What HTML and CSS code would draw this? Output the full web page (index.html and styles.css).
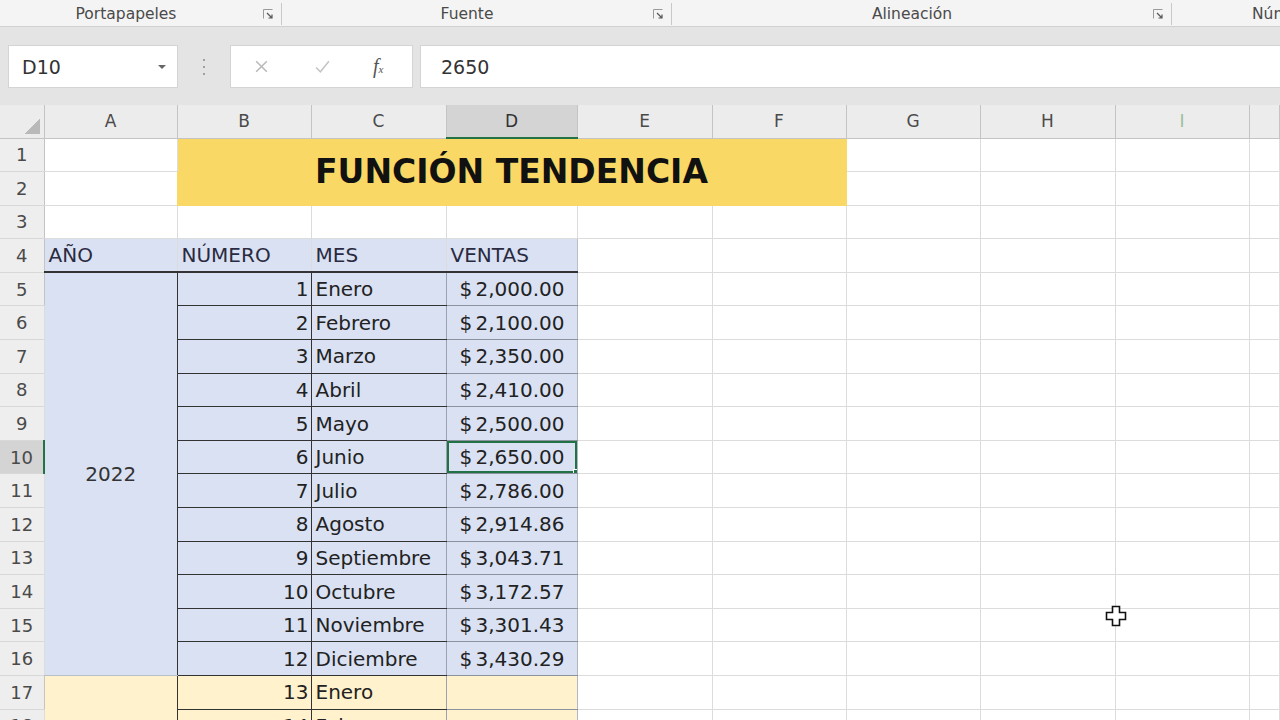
FILE: index.html
```html
<!DOCTYPE html>
<html lang="es">
<head>
    <meta charset="UTF-8">
    <meta name="viewport" content="width=device-width, initial-scale=1.0">
    <title>Función Tendencia</title>
    <link rel="stylesheet" href="styles.css">
</head>
<body>
    <div class="ribbon">
        <div class="group g1">
            <span class="label">Portapapeles</span>
            <svg class="launcher" viewBox="0 0 12 12"><path d="M1.5 10.5v-9h9" fill="none" stroke="#9a9a9a"/><path d="M5 5l5 5M6.5 10H10V6.5" fill="none" stroke="#555" stroke-width="1.2"/></svg>
        </div>
        <div class="group g2">
            <span class="label">Fuente</span>
            <svg class="launcher" viewBox="0 0 12 12"><path d="M1.5 10.5v-9h9" fill="none" stroke="#9a9a9a"/><path d="M5 5l5 5M6.5 10H10V6.5" fill="none" stroke="#555" stroke-width="1.2"/></svg>
        </div>
        <div class="group g3">
            <span class="label">Alineación</span>
            <svg class="launcher" viewBox="0 0 12 12"><path d="M1.5 10.5v-9h9" fill="none" stroke="#9a9a9a"/><path d="M5 5l5 5M6.5 10H10V6.5" fill="none" stroke="#555" stroke-width="1.2"/></svg>
        </div>
        <div class="group g4">
            <span class="label">Número</span>
        </div>
    </div>

    <div class="bar">
        <div class="formula-row">
            <div class="namebox">
                <span>D10</span>
                <svg class="caret" viewBox="0 0 10 6"><path d="M1 1h8L5 5z" fill="#666"/></svg>
            </div>
            <div class="grip"><i></i><i></i><i></i></div>
            <div class="fx-buttons">
                <svg class="fx-icon" viewBox="0 0 16 16"><path d="M3 3l10 10M13 3L3 13" stroke="#b8b8b8" stroke-width="1.4"/></svg>
                <svg class="fx-icon" viewBox="0 0 16 16"><path d="M2 9l4 4 8-10" fill="none" stroke="#c4c4c4" stroke-width="1.4"/></svg>
                <span class="fx">f<small>x</small></span>
            </div>
            <div class="formula">2650</div>
        </div>
    </div>

    <table class="sheet">
        <colgroup>
            <col class="w-rh"><col class="w-a"><col class="w-b"><col class="w-c"><col class="w-d">
            <col class="w-e"><col class="w-f"><col class="w-g"><col class="w-h"><col class="w-i"><col>
        </colgroup>
        <thead>
            <tr>
                <th class="corner"></th><th>A</th><th>B</th><th>C</th><th class="sel">D</th>
                <th>E</th><th>F</th><th>G</th><th>H</th><th class="dim">I</th><th></th>
            </tr>
        </thead>
        <tbody>
            <tr><th>1</th><td></td><td class="title" colspan="5" rowspan="2">FUNCIÓN TENDENCIA</td><td></td><td></td><td></td><td></td></tr>
            <tr><th>2</th><td></td><td></td><td></td><td></td><td></td></tr>
            <tr><th>3</th><td></td><td></td><td></td><td></td><td></td><td></td><td></td><td></td><td></td><td></td></tr>
            <tr><th>4</th><td class="hd">AÑO</td><td class="hd b">NÚMERO</td><td class="hd c">MES</td><td class="hd d">VENTAS</td><td></td><td></td><td></td><td></td><td></td><td></td></tr>
            <tr><th>5</th><td class="year" rowspan="12">2022</td><td class="num">1</td><td class="mes">Enero</td><td class="venta"><span class="sym">$</span>2,000.00</td><td></td><td></td><td></td><td></td><td></td><td></td></tr>
            <tr><th>6</th><td class="num">2</td><td class="mes">Febrero</td><td class="venta"><span class="sym">$</span>2,100.00</td><td></td><td></td><td></td><td></td><td></td><td></td></tr>
            <tr><th>7</th><td class="num">3</td><td class="mes">Marzo</td><td class="venta"><span class="sym">$</span>2,350.00</td><td></td><td></td><td></td><td></td><td></td><td></td></tr>
            <tr><th>8</th><td class="num">4</td><td class="mes">Abril</td><td class="venta"><span class="sym">$</span>2,410.00</td><td></td><td></td><td></td><td></td><td></td><td></td></tr>
            <tr><th>9</th><td class="num">5</td><td class="mes">Mayo</td><td class="venta"><span class="sym">$</span>2,500.00</td><td></td><td></td><td></td><td></td><td></td><td></td></tr>
            <tr><th class="sel">10</th><td class="num">6</td><td class="mes">Junio</td><td class="venta active"><span class="sym">$</span>2,650.00</td><td></td><td></td><td></td><td></td><td></td><td></td></tr>
            <tr><th>11</th><td class="num">7</td><td class="mes">Julio</td><td class="venta"><span class="sym">$</span>2,786.00</td><td></td><td></td><td></td><td></td><td></td><td></td></tr>
            <tr><th>12</th><td class="num">8</td><td class="mes">Agosto</td><td class="venta"><span class="sym">$</span>2,914.86</td><td></td><td></td><td></td><td></td><td></td><td></td></tr>
            <tr><th>13</th><td class="num">9</td><td class="mes">Septiembre</td><td class="venta"><span class="sym">$</span>3,043.71</td><td></td><td></td><td></td><td></td><td></td><td></td></tr>
            <tr><th>14</th><td class="num">10</td><td class="mes">Octubre</td><td class="venta"><span class="sym">$</span>3,172.57</td><td></td><td></td><td></td><td></td><td></td><td></td></tr>
            <tr><th>15</th><td class="num">11</td><td class="mes">Noviembre</td><td class="venta"><span class="sym">$</span>3,301.43</td><td></td><td></td><td></td><td></td><td></td><td></td></tr>
            <tr><th>16</th><td class="num">12</td><td class="mes">Diciembre</td><td class="venta"><span class="sym">$</span>3,430.29</td><td></td><td></td><td></td><td></td><td></td><td></td></tr>
            <tr><th>17</th><td class="year next" rowspan="2"></td><td class="num next">13</td><td class="mes next">Enero</td><td class="venta next"></td><td></td><td></td><td></td><td></td><td></td><td></td></tr>
            <tr><th>18</th><td class="num next">14</td><td class="mes next">Febrero</td><td class="venta next"></td><td></td><td></td><td></td><td></td><td></td><td></td></tr>
        </tbody>
    </table>

    <!-- cell pointer hovering over column I -->
    <svg class="pointer" viewBox="0 0 24 24"><path d="M8.5 2.5h7v6h6v7h-6v6h-7v-6h-6v-7h6z" fill="#fff" stroke="#111" stroke-width="1.6"/></svg>
</body>
</html>
```

FILE: styles.css
```css
body {
    margin: 0;
    width: 1280px;
    height: 720px;
    overflow: hidden;
    position: relative;
    background-color: #fff;
    font-family: 'DejaVu Sans', 'Liberation Sans', sans-serif;
    color: #222;
}

/* ribbon group captions */
.ribbon {
    display: flex;
    align-items: center;
    height: 26px;
    background-color: #f4f4f4;
    border-bottom: 1px solid #d0d0d0;
}
.group {
    display: flex;
    align-items: center;
    height: 22px;
    margin-top: 1px;
    border-right: 1px solid #c9c9c9;
}
.g1 { width: 281px; }
.g2 { width: 389px; }
.g3 { width: 499px; }
.g4 { flex: 1; border-right: none; padding-left: 80px; overflow: hidden; white-space: nowrap; }
.label {
    flex: 1;
    text-align: center;
    font-size: 15.5px;
    color: #4a4a4a;
}
.g1 .label { padding-right: 10px; }
.g4 .label { flex: none; text-align: left; }
.launcher {
    width: 12px;
    height: 12px;
    margin-right: 7px;
}

/* name box + formula bar */
.bar {
    background-color: #e4e4e4;
    padding: 18px 0 17px;
}
.formula-row {
    display: flex;
    align-items: stretch;
    height: 43px;
}
.namebox {
    display: flex;
    align-items: center;
    justify-content: space-between;
    width: 170px;
    margin-left: 8px;
    padding: 0 10px 0 13px;
    box-sizing: border-box;
    background-color: #fff;
    border: 1px solid #d4d4d4;
    font-size: 19px;
    color: #333;
}
.caret {
    width: 10px;
    height: 6px;
}
.grip {
    width: 52px;
    display: flex;
    flex-direction: column;
    align-items: center;
    justify-content: center;
    gap: 5px;
}
.grip i {
    width: 2px;
    height: 2px;
    background-color: #a0a0a0;
}
.fx-buttons {
    display: flex;
    align-items: center;
    width: 183px;
    box-sizing: border-box;
    padding-left: 22px;
    background-color: #fff;
    border: 1px solid #d4d4d4;
}
.fx-icon {
    width: 17px;
    height: 17px;
    margin-right: 44px;
}
.fx {
    font-family: 'Liberation Serif', serif;
    font-style: italic;
    font-size: 20px;
    color: #555;
    margin-left: -2px;
}
.fx small {
    font-size: 11px;
}
.formula {
    flex: 1;
    margin-left: 7px;
    padding-left: 20px;
    display: flex;
    align-items: center;
    background-color: #fff;
    border: 1px solid #d4d4d4;
    border-right: none;
    font-size: 19px;
    color: #333;
}

/* worksheet grid */
.sheet {
    border-collapse: collapse;
    table-layout: fixed;
    width: 1280px;
}
.w-rh { width: 44px; }
.w-a { width: 133px; }
.w-b { width: 134px; }
.w-c { width: 135px; }
.w-d { width: 131px; }
.w-e, .w-h { width: 135px; }
.w-f, .w-g, .w-i { width: 134px; }

thead th {
    height: 32px;
    padding: 0;
    background-color: #ececec;
    border-right: 1px solid #c4c4c4;
    border-bottom: 1px solid #c4c4c4;
    font-weight: normal;
    font-size: 17px;
    color: #4a4a4a;
}
thead th.sel {
    background-color: #d4d4d4;
    border-bottom: 2px solid #217346;
    color: #333;
}
thead th.dim {
    color: #9bbf9b;
}
thead th.corner {
    background: linear-gradient(135deg, #ececec 58%, #b9b9b9 58%) no-repeat;
    background-size: 18px 18px;
    background-position: right 4px bottom 4px;
    background-color: #ececec;
}

tbody tr {
    height: 33.6px;
}
tbody th {
    padding: 0;
    background-color: #eeeeee;
    border-right: 1px solid #c4c4c4;
    border-bottom: 1px solid #d8d8d8;
    font-weight: normal;
    font-size: 18px;
    color: #4a4a4a;
}
tbody th.sel {
    background-color: #d4d4d4;
    border-right: 2px solid #217346;
}
td {
    padding: 0 4px;
    border: 1px solid #dcdcdc;
    font-size: 20px;
    white-space: nowrap;
    overflow: hidden;
}

.title {
    background-color: #f9d866;
    text-align: center;
    font-weight: bold;
    font-size: 33px;
    color: #111;
    border-color: #f9d866;
}

.hd {
    background-color: #d9e1f2;
    border-bottom: 2px solid #333;
    border-top-color: #d9e1f2;
    color: #2a2a40;
}
.hd.b, .hd.c { border-left: 1px solid #333; }
.hd.d { border-left-color: #b8bfcc; border-right-color: #b8bfcc; }

.year {
    background-color: #d9e1f2;
    text-align: center;
    color: #333;
    border-right: 1px solid #333;
    border-bottom-color: #b8bfcc;
}
.num {
    background-color: #d9e1f2;
    text-align: right;
    padding-right: 2px;
    border: 1px solid #333;
}
.mes {
    background-color: #d9e1f2;
    padding-left: 4px;
    border-left: 1px solid #333;
    border-bottom: 1px solid #333;
    border-right-color: #9aa2b0;
}
.venta {
    background-color: #d9e1f2;
    text-align: right;
    padding: 0 12px 0 13px;
    border-bottom: 1px solid #8c939e;
    border-right-color: #b0b6c2;
}
.venta .sym {
    float: left;
}
.next {
    background-color: #fff2cc;
}
.year.next {
    border-top-color: #b8b8a8;
}

/* active cell with its fill handle */
.active {
    position: relative;
    box-shadow: inset 0 0 0 2px #217346;
}
.active::after {
    content: "";
    position: absolute;
    right: -4px;
    bottom: -4px;
    width: 6px;
    height: 6px;
    background-color: #217346;
    border: 1px solid #fff;
}

.pointer {
    position: absolute;
    left: 1104px;
    top: 604px;
    width: 24px;
    height: 24px;
}
```
